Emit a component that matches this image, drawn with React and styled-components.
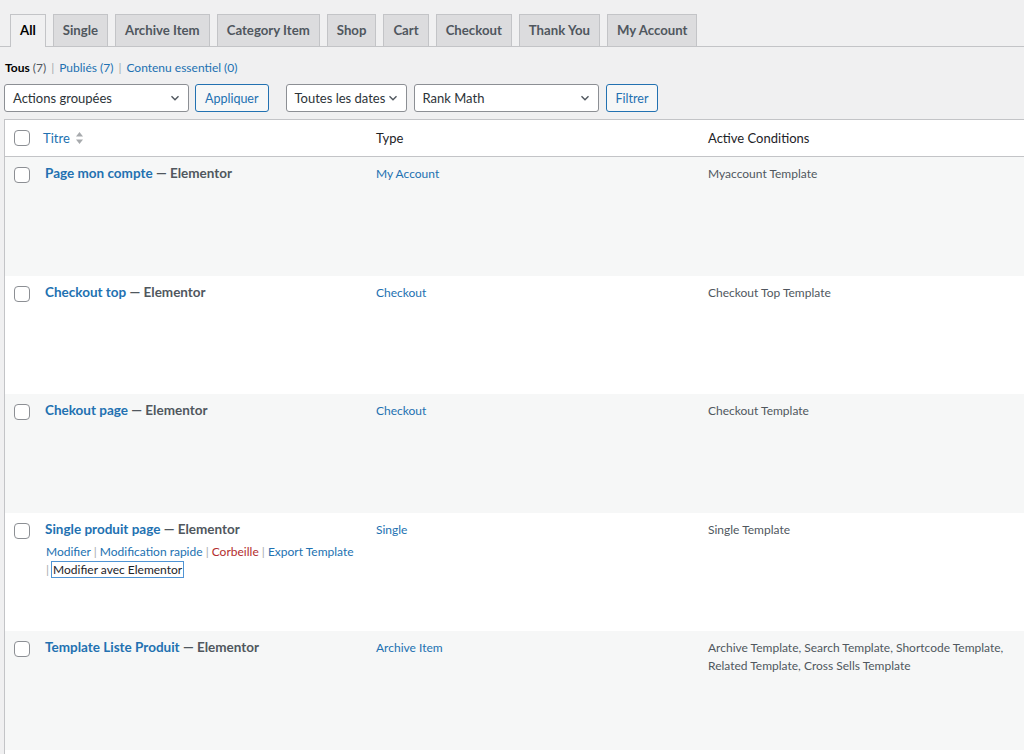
import React from 'react';
import styled, { createGlobalStyle } from 'styled-components';

const Global = createGlobalStyle`
  html, body {
    margin: 0;
    background: #f0f0f1;
    font-family: 'Lato', 'Open Sans', sans-serif;
    font-size: 13px;
    color: #3c434a;
    overflow: hidden;
  }
`;

const Page = styled.div`
  width: 1024px;
  height: 754px;
  overflow: hidden;
  padding-left: 4px;
  box-sizing: border-box;
`;

const Tabs = styled.nav`
  display: flex;
  gap: 7px;
  padding: 14px 0 0 10px;
  border-bottom: 1px solid #c3c4c7;
  margin-left: -4px;
`;

const Tab = styled.span`
  display: block;
  line-height: 31px;
  padding: 0 9px;
  font-size: 13.2px;
  font-weight: 700;
  white-space: nowrap;
  border: 1px solid #c3c4c7;
  border-bottom: none;
  background: ${p => (p.active ? '#f0f0f1' : '#dcdcde')};
  color: ${p => (p.active ? '#000' : '#50575e')};
  margin-bottom: ${p => (p.active ? '-1px' : '0')};
  height: ${p => (p.active ? '32px' : '31px')};
`;

const Statuses = styled.ul`
  display: flex;
  list-style: none;
  margin: 12px 0 0 1px;
  padding: 0;
  font-size: 12px;
  color: #50575e;
  line-height: 18px;
`;

const Status = styled.li`
  a {
    color: ${p => (p.current ? '#000' : '#2271b1')};
    font-weight: ${p => (p.current ? 700 : 400)};
    text-decoration: none;
  }
  .count {
    color: #50575e;
  }
  .sep {
    margin: 0 5px;
    color: #a7aaad;
  }
`;

const Filters = styled.div`
  display: flex;
  align-items: center;
  margin-top: 7px;
  height: 28px;
`;

const Select = styled.div`
  display: flex;
  align-items: center;
  justify-content: space-between;
  width: ${p => p.w}px;
  height: 28px;
  box-sizing: border-box;
  padding: 0 6px 0 8px;
  margin-left: ${p => p.ml || 0}px;
  background: #fff;
  border: 1px solid #8c8f94;
  border-radius: 3px;
  font-size: 13px;
  color: #2c3338;
  white-space: nowrap;
`;

const Button = styled.span`
  display: flex;
  align-items: center;
  height: 28px;
  box-sizing: border-box;
  padding: 0 9px;
  margin-left: ${p => p.ml || 0}px;
  border: 1px solid #2271b1;
  border-radius: 3px;
  background: #f6f7f7;
  color: #2271b1;
  font-size: 12.5px;
  white-space: nowrap;
`;

const Table = styled.div`
  margin-top: 7px;
  width: 1026px;
  border-left: 1px solid #c3c4c7;
  border-top: 1px solid #c3c4c7;
  background: #fff;
`;

const Row = styled.div`
  display: grid;
  grid-template-columns: 30px 331px 332px 332px;
  height: ${p => (p.head ? '36px' : '118.5px')};
  background: ${p => (p.alt ? '#f6f7f7' : '#fff')};
  border-bottom: ${p => (p.head ? '1px solid #c3c4c7' : 'none')};
  align-items: ${p => (p.head ? 'center' : 'start')};
`;

const CheckCell = styled.div`
  padding: ${p => (p.head ? '0 0 0 9px' : '10px 0 0 9px')};
`;

const Box = styled.span`
  display: block;
  width: 14px;
  height: 14px;
  border: 1px solid #8c8f94;
  border-radius: 4px;
  background: #fff;
`;

const Cell = styled.div`
  padding: ${p => (p.head ? '0 10px' : '8px 10px')};
  color: ${p => (p.link ? '#2271b1' : p.head ? '#1d2327' : '#50575e')};
  font-size: ${p => (p.head ? '13px' : '12px')};
  line-height: 18px;
`;

const SortLink = styled.span`
  display: inline-flex;
  align-items: center;
  gap: 5px;
  color: #2271b1;
  margin-left: -2px;
`;

const Title = styled.div`
  font-size: 13.5px;
  font-weight: 700;
  line-height: 19px;
  margin-top: -1px;
  a {
    color: #2271b1;
    text-decoration: none;
  }
  span {
    color: #50575e;
  }
`;

const Actions = styled.div`
  font-size: 12px;
  line-height: 18px;
  margin-top: 4px;
  margin-left: 1px;
  color: #a7aaad;
  white-space: nowrap;
  a {
    color: #2271b1;
    text-decoration: none;
  }
  a.trash {
    color: #b32d2e;
  }
  a.focus {
    color: #1d2327;
    outline: 1px solid #4f94d4;
    padding: 0 1px;
    box-shadow: 0 0 0 1px rgba(79, 148, 212, 0.25);
  }
`;

const Chevron = () => (
  <svg width="14" height="14" viewBox="0 0 20 20">
    <path d="M5 7.5l5 5 5-5" fill="none" stroke="#50575e" strokeWidth="2" />
  </svg>
);

const SortArrows = () => (
  <svg width="9" height="14" viewBox="0 0 9 14">
    <path d="M4.5 1L8 5.5H1z" fill="#a7aaad" />
    <path d="M4.5 13L1 8.5h7z" fill="#a7aaad" />
  </svg>
);

const tabs = ['All', 'Single', 'Archive Item', 'Category Item', 'Shop', 'Cart', 'Checkout', 'Thank You', 'My Account'];

const rows = [
  { title: 'Page mon compte', type: 'My Account', cond: 'Myaccount Template' },
  { title: 'Checkout top', type: 'Checkout', cond: 'Checkout Top Template' },
  { title: 'Chekout page', type: 'Checkout', cond: 'Checkout Template' },
  { title: 'Single produit page', type: 'Single', cond: 'Single Template', actions: true },
  {
    title: 'Template Liste Produit',
    type: 'Archive Item',
    cond: 'Archive Template, Search Template, Shortcode Template, Related Template, Cross Sells Template',
  },
];

export default function App() {
  return (
    <Page>
      <Global />
      <Tabs>
        {tabs.map((t, i) => (
          <Tab key={t} active={i === 0}>
            {t}
          </Tab>
        ))}
      </Tabs>
      <Statuses>
        <Status current>
          <a>Tous</a> <span className="count">(7)</span>
          <span className="sep">|</span>
        </Status>
        <Status>
          <a>Publiés (7)</a>
          <span className="sep">|</span>
        </Status>
        <Status>
          <a>Contenu essentiel (0)</a>
        </Status>
      </Statuses>
      <Filters>
        <Select w={185}>
          Actions groupées <Chevron />
        </Select>
        <Button ml={6}>Appliquer</Button>
        <Select w={121} ml={17}>
          Toutes les dates <Chevron />
        </Select>
        <Select w={185} ml={7}>
          Rank Math <Chevron />
        </Select>
        <Button ml={7}>Filtrer</Button>
      </Filters>
      <Table>
        <Row head>
          <CheckCell head>
            <Box />
          </CheckCell>
          <Cell head>
            <SortLink>
              Titre <SortArrows />
            </SortLink>
          </Cell>
          <Cell head>Type</Cell>
          <Cell head>Active Conditions</Cell>
        </Row>
        {rows.map((r, i) => (
          <Row key={r.title} alt={i % 2 === 0}>
            <CheckCell>
              <Box />
            </CheckCell>
            <Cell>
              <Title>
                <a>{r.title}</a> <span>— Elementor</span>
              </Title>
              {r.actions && (
                <Actions>
                  <a>Modifier</a> | <a>Modification rapide</a> | <a className="trash">Corbeille</a> |{' '}
                  <a>Export Template</a>
                  <br />| <a className="focus">Modifier avec Elementor</a>
                </Actions>
              )}
            </Cell>
            <Cell link>{r.type}</Cell>
            <Cell>{r.cond}</Cell>
          </Row>
        ))}
        <Row />
      </Table>
    </Page>
  );
}
